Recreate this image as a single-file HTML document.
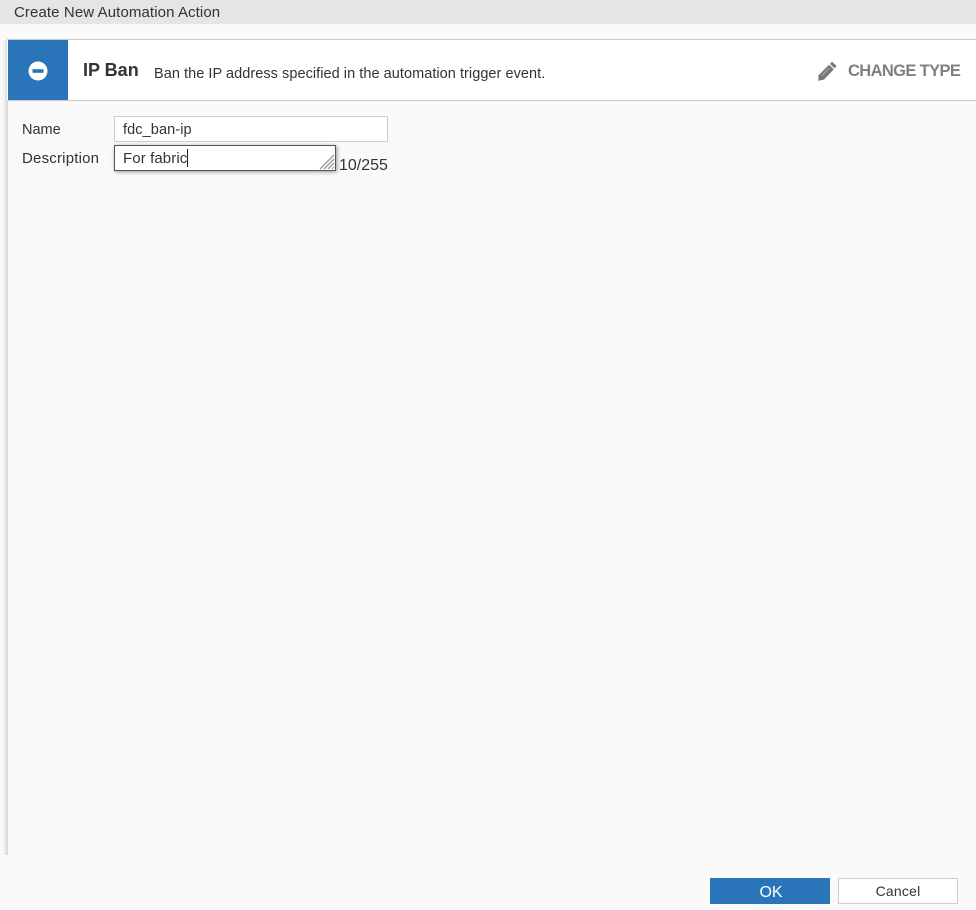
<!DOCTYPE html>
<html>
<head>
<meta charset="utf-8">
<style>
html,body{margin:0;padding:0;width:976px;height:910px;overflow:hidden;background:#fafafa;}
body{position:relative;font-family:"Liberation Sans",sans-serif;color:#333;font-size:14px;}
.t{position:absolute;white-space:nowrap;line-height:18px;}
.b{position:absolute;box-sizing:border-box;}
</style>
</head>
<body>
<div class="b" style="left:0;top:0;width:976px;height:24px;background:#e5e5e5;"></div>
<div class="t" style="left:14px;top:4px;font-size:15px;letter-spacing:.1px;color:#333;">Create New Automation Action</div>

<div class="b" style="left:3px;top:40px;width:5px;height:815px;background:linear-gradient(to right,#fafafa,#d4d4d4);"></div>
<div class="b" style="left:7px;top:39px;width:969px;height:62px;background:#fff;border-top:1px solid #ccc;border-bottom:1px solid #ccc;"></div>
<div class="b" style="left:8px;top:40px;width:60px;height:60px;background:#2a75b9;"></div>
<svg class="b" style="left:28px;top:61px;" width="20" height="20" viewBox="0 0 20 20"><circle cx="10" cy="10" r="9.5" fill="#fff"/><rect x="4.5" y="8.2" width="11" height="3.6" fill="#2a75b9"/></svg>
<div class="t" style="left:83px;top:60px;font-size:18px;font-weight:bold;line-height:20px;color:#333;">IP Ban</div>
<div class="t" style="left:154px;top:65px;font-size:14.5px;letter-spacing:.05px;color:#333;">Ban the IP address specified in the automation trigger event.</div>
<svg class="b" style="left:818px;top:61px;" width="19" height="20" viewBox="0 0 19 20"><path d="M14 .8 L18.6 5 L16.6 7.2 L12 3 Z" fill="#777"/><path d="M11 3.8 L15.8 8.2 L6 18.6 L0.3 19.8 L0.5 14.4 Z" fill="#777"/><path d="M3.5 15 L11.5 6.8" stroke="#ccc" stroke-width=".6" fill="none"/></svg>
<div class="t" style="left:848px;top:61px;font-size:16.5px;font-weight:bold;line-height:20px;letter-spacing:-.63px;color:#808080;">CHANGE TYPE</div>

<div class="t" style="left:22px;top:121px;font-size:14.5px;">Name</div>
<div class="b" style="left:114px;top:116px;width:274px;height:26px;background:#fff;border:1px solid #ccc;"></div>
<div class="t" style="left:123px;top:121px;font-size:14.5px;letter-spacing:.1px;">fdc_ban-ip</div>

<div class="t" style="left:22px;top:150px;font-size:15px;letter-spacing:.2px;">Description</div>
<div class="b" style="left:114px;top:145px;width:222px;height:26px;background:#fff;border:1px solid #555;box-shadow:1px 1px 4px rgba(0,0,0,.4);"></div>
<div class="t" style="left:123px;top:150px;font-size:15px;letter-spacing:.1px;">For fabric</div>
<div class="b" style="left:187px;top:149px;width:1px;height:18px;background:#222;"></div>
<svg class="b" style="left:319px;top:154px;" width="16" height="16" viewBox="0 0 16 16"><path d="M1 15 L15 1 M5 15 L15 5 M9 15 L15 9 M13 15 L15 13" stroke="#999" stroke-width="1.3" fill="none"/></svg>
<div class="t" style="left:339px;top:157px;font-size:16px;">10/255</div>

<div class="b" style="left:710px;top:878px;width:120px;height:26px;background:#2a75b9;"></div>
<div class="t" style="left:711px;top:884px;width:120px;text-align:center;color:#fff;font-size:16px;">OK</div>
<div class="b" style="left:838px;top:878px;width:120px;height:26px;background:#fff;border:1px solid #ccc;"></div>
<div class="t" style="left:838px;top:882px;width:120px;text-align:center;font-size:14px;letter-spacing:.2px;">Cancel</div>
</body>
</html>
